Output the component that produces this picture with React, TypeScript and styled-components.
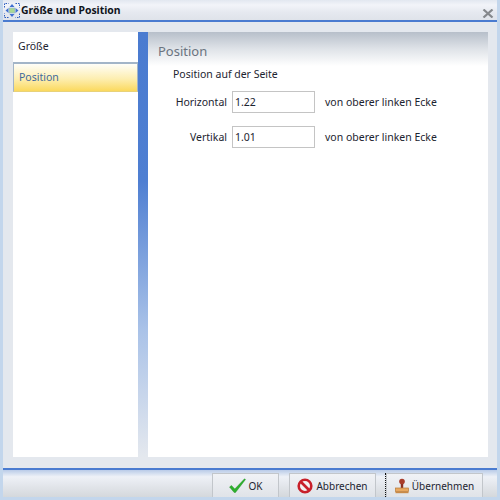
import React from 'react'
import styled, { createGlobalStyle } from 'styled-components'

const GlobalStyle = createGlobalStyle`
  html, body {
    margin: 0;
    padding: 0;
  }
  body {
    font-family: "Noto Sans", "Liberation Sans", sans-serif;
    font-size: 10.5px;
    color: #1c2430;
  }
`

const Dialog = styled.div`
  width: 500px;
  height: 500px;
  box-sizing: border-box;
  padding: 0 3px 3px;
  background: #c3d6ec;
  display: flex;
  flex-direction: column;
`

const TitleBar = styled.header`
  height: 20px;
  flex: none;
  display: flex;
  align-items: center;
  gap: 1px;
  padding: 0 3px 0 1px;
  background: linear-gradient(#e2e7f0, #f2f4f9 25%, #e6e9f0 60%, #dfe3ea);
  border-bottom: 2px solid #4a7bd0;
`

const Title = styled.h1`
  margin: 0;
  flex: 1;
  font-size: 10.4px;
  font-weight: 700;
  color: #10141c;
`

const CloseIcon = styled.svg`
  width: 12px;
  height: 9px;
  margin-top: 7px;
`

const Body = styled.main`
  flex: 1;
  min-height: 0;
  display: flex;
  padding: 10px 9px 11px 10px;
  background: #e4e8ee;
`

const Sidebar = styled.nav`
  width: 125px;
  flex: none;
  background: #fff;
`

const NavItem = styled.div<{ $active?: boolean }>`
  height: 30px;
  box-sizing: border-box;
  display: flex;
  align-items: center;
  padding: 0 0 2px ${p => (p.$active ? 5 : 4)}px;
  color: ${p => (p.$active ? '#3f6a9c' : '#1c2430')};
  background: ${p => (p.$active ? 'linear-gradient(#fffef8, #fdeeb0 55%, #fbd95e)' : '#fff')};
  border: ${p => (p.$active ? '1px solid #a3b5c8' : '1px solid transparent')};
  border-bottom-color: ${p => (p.$active ? '#e8d27a' : 'transparent')};
  border-top-width: ${p => (p.$active ? '2px' : '1px')};
`

const Strip = styled.div`
  width: 10px;
  flex: none;
  background: linear-gradient(#4a7bd0, #4f7fd2 35%, #a9c2e8 70%, #e4e8ee);
`

const Panel = styled.section`
  flex: 1;
  min-width: 0;
  background: #fff;
  display: flex;
  flex-direction: column;
`

const PanelHeading = styled.h2`
  margin: 0;
  height: 34px;
  flex: none;
  box-sizing: border-box;
  padding: 10px 0 0 10px;
  font-size: 13px;
  font-weight: 400;
  line-height: 18px;
  color: #6b7480;
  background: linear-gradient(#b7bfca, #dfe3e8 50%, #fff);
`

const PanelContent = styled.div`
  display: flex;
  flex-direction: column;
  padding: 0 0 0 25px;
`

const GroupTitle = styled.div`
  height: 16px;
  line-height: 16px;
  margin-bottom: 9px;
`

const Row = styled.div`
  display: flex;
  align-items: center;
  height: 22px;

  & + & {
    margin-top: 13px;
  }
`

const Label = styled.label`
  width: 54px;
  flex: none;
  text-align: right;
  margin-right: 5px;
`

const NumberInput = styled.input`
  width: 83px;
  height: 22px;
  box-sizing: border-box;
  flex: none;
  border: 1px solid #c4c4c4;
  padding: 0 2px;
  font: inherit;
  color: inherit;
  background: #fff;
  outline: none;
`

const Hint = styled.span`
  margin-left: 10px;
`

const Footer = styled.footer`
  height: 27px;
  flex: none;
  display: flex;
  justify-content: flex-end;
  align-items: flex-end;
  padding-right: 14px;
  border-top: 2px solid #4a7bd0;
  background: linear-gradient(#b9cbe8, #eef1f7 25%, #e2e5ea 60%, #d4d8dc);
`

const Button = styled.button<{ $width: number; $gap?: number }>`
  width: ${p => p.$width}px;
  height: 24px;
  box-sizing: border-box;
  margin-left: ${p => p.$gap ?? 0}px;
  display: flex;
  align-items: center;
  justify-content: center;
  gap: 3px;
  padding: 0;
  border: 1px solid #c2c6cb;
  border-bottom: none;
  background: linear-gradient(#f0f2f6, #e0e3e8);
  font-family: inherit;
  font-size: 10px;
  color: inherit;
`

const Separator = styled.div`
  width: 0;
  height: 24px;
  margin-left: 9px;
  border-left: 1px dotted #111;
`

const AppIcon = () => (
  <svg width="16" height="15" viewBox="0 0 16 15" style={{ flex: 'none' }}>
    <path d="M.5 4.5V.5H4.5M11.5 .5H15.5V4.5M15.5 10.5V14.5H11.5M4.5 14.5H.5V10.5" fill="none" stroke="#2a5cc0" strokeWidth="1" strokeDasharray="1.5 1" />
    <path d="M8 1L10.5 4H5.5Z M8 14L10.5 11H5.5Z M1.5 7.5L4.5 5V10Z M14.5 7.5L11.5 5V10Z" fill="#3f6fd0" />
    <rect x="5" y="5" width="6" height="5" fill="#a9d894" stroke="#8fb0d8" strokeWidth=".6" />
  </svg>
)

const CheckIcon = () => (
  <svg width="17" height="15" viewBox="0 0 17 15">
    <path d="M.5 9L2.5 7.5L5.8 11L15.5 .8L16.5 1.5L6.5 14.5H5.2Z" fill="#2eb02e" stroke="#1c8a1c" strokeWidth=".4" />
  </svg>
)

const StopIcon = () => (
  <svg width="16" height="16" viewBox="0 0 16 16">
    <circle cx="8" cy="8" r="6.3" fill="#f4f2f2" stroke="#c8202a" strokeWidth="2.6" />
    <path d="M3.5 3.5L12.5 12.5" stroke="#c8202a" strokeWidth="2.6" />
  </svg>
)

const StampIcon = () => (
  <svg width="14" height="16" viewBox="0 0 14 16">
    <circle cx="7" cy="3.6" r="2.8" fill="#a83c2a" />
    <rect x="5.8" y="6" width="2.4" height="4" fill="#8a3022" />
    <rect x=".5" y="10" width="13" height="3.4" fill="#e8a860" stroke="#b87a38" strokeWidth=".7" />
    <rect x=".5" y="13.4" width="13" height="1.8" fill="#c98a48" />
  </svg>
)

const App: React.FC = () => {
  return (
    <Dialog>
      <GlobalStyle />
      <TitleBar>
        <AppIcon />
        <Title>Größe und Position</Title>
        <CloseIcon viewBox="0 0 12 9">
          <path d="M1.5 .5L10.5 8.5M10.5 .5L1.5 8.5" stroke="#85888c" strokeWidth="2.2" />
        </CloseIcon>
      </TitleBar>
      <Body>
        <Sidebar>
          <NavItem>Größe</NavItem>
          <NavItem $active>Position</NavItem>
        </Sidebar>
        <Strip />
        <Panel>
          <PanelHeading>Position</PanelHeading>
          <PanelContent>
            <GroupTitle>Position auf der Seite</GroupTitle>
            <Row>
              <Label>Horizontal</Label>
              <NumberInput defaultValue="1.22" />
              <Hint>von oberer linken Ecke</Hint>
            </Row>
            <Row>
              <Label>Vertikal</Label>
              <NumberInput defaultValue="1.01" />
              <Hint>von oberer linken Ecke</Hint>
            </Row>
          </PanelContent>
        </Panel>
      </Body>
      <Footer>
        <Button $width={67}><CheckIcon />OK</Button>
        <Button $width={87} $gap={10}><StopIcon />Abbrechen</Button>
        <Separator />
        <Button $width={97}><StampIcon />Übernehmen</Button>
      </Footer>
    </Dialog>
  )
}

export default App
